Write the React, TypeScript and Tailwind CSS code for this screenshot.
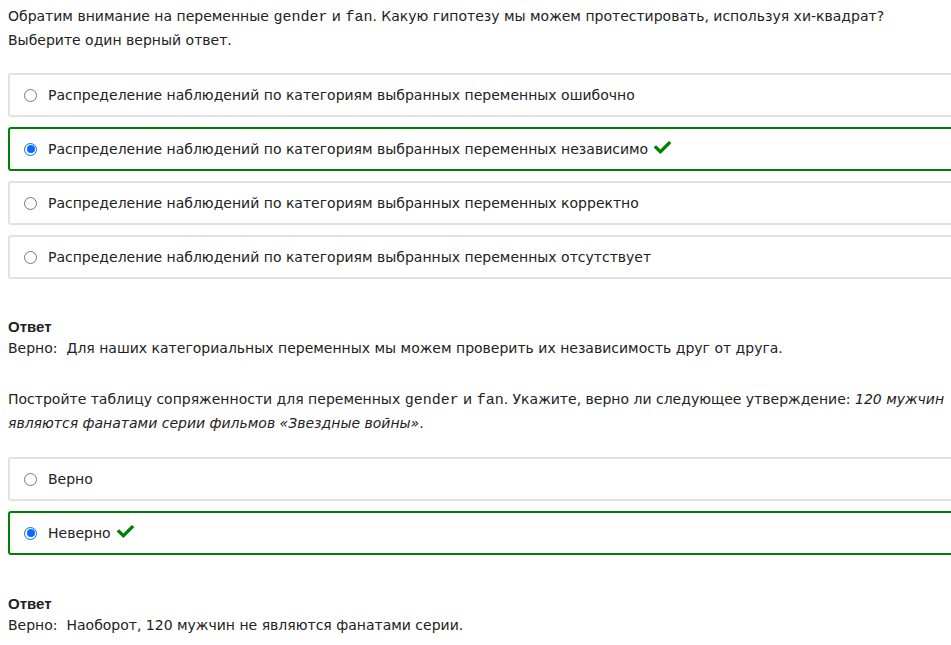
import React from 'react';

const font = { fontFamily: '"DejaVu Sans", sans-serif' };

function Check() {
  return (
    <svg viewBox="0 0 512 512" className="inline-block w-[17px] h-[17px] ml-[6px] align-[-2px]" fill="#008000">
      <path d="M173.9 439.4l-166.4-166.4c-10-10-10-26.2 0-36.2l36.2-36.2c10-10 26.2-10 36.2 0L192 312.7 432.1 72.6c10-10 26.2-10 36.2 0l36.2 36.2c10 10 10 26.2 0 36.2L210.1 439.4c-10 10-26.2 10-36.2 0z" />
    </svg>
  );
}

function Option({ label, selected }: { label: string; selected?: boolean }) {
  return (
    <div
      className={`flex items-center h-[44px] pl-[14px] rounded-[3px] border-2 bg-white ${
        selected ? 'border-[#008000]' : 'border-[#e2e2e2]'
      }`}
    >
      {selected ? (
        <span className="w-[13px] h-[13px] rounded-full border border-[#0a6cff] bg-white flex items-center justify-center">
          <span className="w-[8px] h-[8px] rounded-full bg-[#0a6cff]" />
        </span>
      ) : (
        <span className="w-[13px] h-[13px] rounded-full border border-[#767676] bg-white" />
      )}
      <span className="ml-[11px] text-[14px] text-[#222]">
        {label}
        {selected && <Check />}
      </span>
    </div>
  );
}

function Code({ children }: { children: React.ReactNode }) {
  return <code style={{ fontFamily: '"Liberation Mono", "Courier New", monospace' }} className="text-[15px]">{children}</code>;
}

function Answer({ text }: { text: string }) {
  return (
    <div className="text-[14px] text-[#222]">
      <div className="font-bold text-[15px] leading-[21px]" style={{ fontFamily: '"Liberation Sans", sans-serif' }}>Ответ</div>
      <div className="leading-[22px]">Верно:&nbsp; {text}</div>
    </div>
  );
}

export default function App() {
  const opts = [
    'Распределение наблюдений по категориям выбранных переменных ошибочно',
    'Распределение наблюдений по категориям выбранных переменных независимо',
    'Распределение наблюдений по категориям выбранных переменных корректно',
    'Распределение наблюдений по категориям выбранных переменных отсутствует',
  ];
  return (
    <div className="w-full h-[645px] overflow-hidden bg-white" style={font}>
      <div className="w-[960px] pl-[8px] pt-[5px]">
        <p className="text-[14px] leading-[23px] text-[#222]">
          Обратим внимание на переменные <Code>gender</Code> и <Code>fan</Code>. Какую гипотезу мы можем протестировать, используя хи-квадрат? Выберите один верный ответ.
        </p>
        <div className="mt-[21px] flex flex-col gap-[10px]">
          {opts.map((o, i) => (
            <Option key={o} label={o} selected={i === 1} />
          ))}
        </div>
        <div className="mt-[37px]">
          <Answer text="Для наших категориальных переменных мы можем проверить их независимость друг от друга." />
        </div>
        <p className="mt-[29px] text-[14px] leading-[23px] text-[#222]">
          Постройте таблицу сопряженности для переменных <Code>gender</Code> и <Code>fan</Code>. Укажите, верно ли следующее утверждение:{' '}
          <i>120 мужчин являются фанатами серии фильмов «Звездные войны»</i>.
        </p>
        <div className="mt-[22px] flex flex-col gap-[10px]">
          <Option label="Верно" />
          <Option label="Неверно" selected />
        </div>
        <div className="mt-[38px]">
          <Answer text="Наоборот, 120 мужчин не являются фанатами серии." />
        </div>
      </div>
    </div>
  );
}
